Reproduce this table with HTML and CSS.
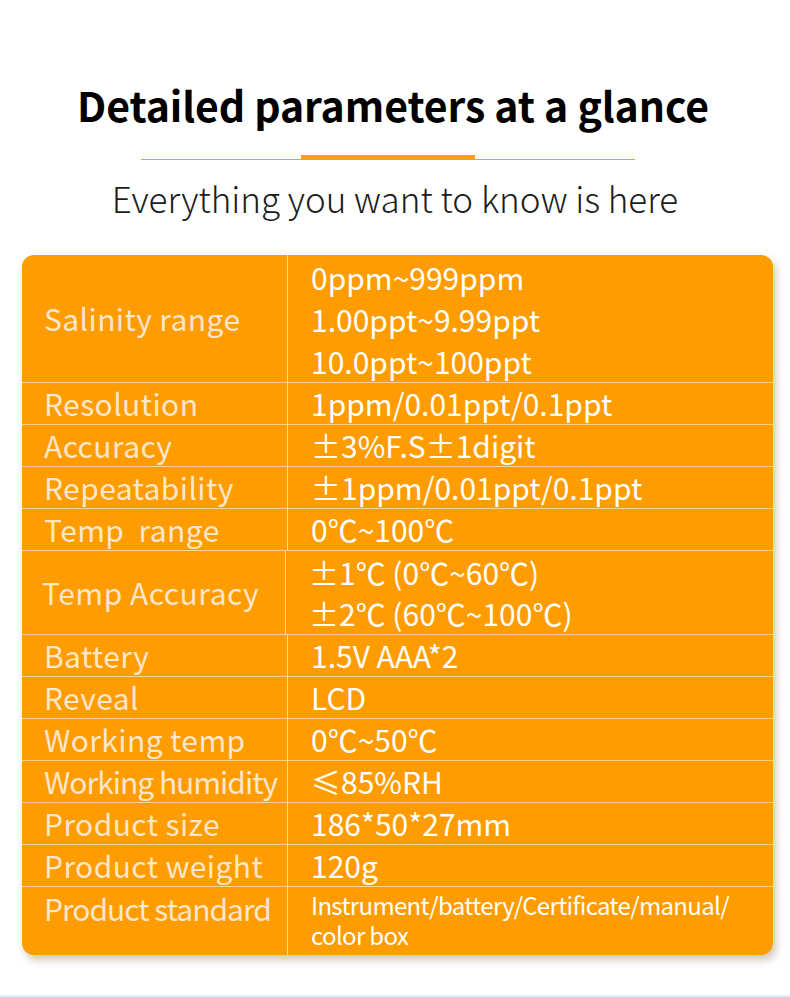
FILE: index.html
```html
<!DOCTYPE html>
<html lang="en">
<head>
<meta charset="utf-8">
<title>Detailed parameters</title>
<link rel="stylesheet" href="styles.css">
</head>
<body>
<div class="page">
  <h1 class="title">Detailed parameters at a glance</h1>
  <div class="divider"><span class="bar"></span><span class="line"></span></div>
  <p class="subtitle">Everything you want to know is here</p>
  <div class="table">
    <div class="row r3"><div class="label">Salinity range</div><div class="value"><div>0ppm~999ppm</div><div>1.00ppt~9.99ppt</div><div>10.0ppt~100ppt</div></div></div>
    <div class="row"><div class="label">Resolution</div><div class="value">1ppm/0.01ppt/0.1ppt</div></div>
    <div class="row"><div class="label">Accuracy</div><div class="value">±3%F.S±1digit</div></div>
    <div class="row"><div class="label">Repeatability</div><div class="value">±1ppm/0.01ppt/0.1ppt</div></div>
    <div class="row"><div class="label">Temp&nbsp; range</div><div class="value">0℃~100℃</div></div>
    <div class="row r2"><div class="label narrow">Temp Accuracy</div><div class="value"><div>±1℃ (0℃~60℃)</div><div>±2℃ (60℃~100℃)</div></div></div>
    <div class="row"><div class="label">Battery</div><div class="value">1.5V AAA*2</div></div>
    <div class="row"><div class="label">Reveal</div><div class="value">LCD</div></div>
    <div class="row"><div class="label">Working temp</div><div class="value">0℃~50℃</div></div>
    <div class="row"><div class="label condensed">Working humidity</div><div class="value">≤85%RH</div></div>
    <div class="row"><div class="label">Product size</div><div class="value">186*50*27mm</div></div>
    <div class="row"><div class="label">Product weight</div><div class="value">120g</div></div>
    <div class="row last"><div class="label condensed">Product standard</div><div class="value small"><div>Instrument/battery/Certificate/manual/</div><div>color box</div></div></div>
  </div>
</div>
<div class="footline"></div>
</body>
</html>
```
FILE: styles.css
```css
html, body {
  margin: 0;
  padding: 0;
  background: #ffffff;
}
body {
  width: 790px;
  height: 997px;
  overflow: hidden;
  position: relative;
  font-family: "Noto Sans CJK SC", "Noto Sans", sans-serif;
}
.page {
  padding-top: 74px;
  height: 920px;
}
.title {
  margin: 0;
  text-align: center;
  font-size: 41px;
  font-weight: 700;
  line-height: 60px;
  color: #000;
  letter-spacing: -0.1px;
  padding-right: 4px;
}
.divider {
  margin: 21px 0 0 141px;
  width: 494px;
  height: 5px;
  position: relative;
}
.divider .line {
  position: absolute;
  left: 0;
  right: 0;
  bottom: 0;
  height: 1px;
  background: #fd9f14;
}
.bar {
  position: absolute;
  left: 160px;
  top: 0;
  width: 174px;
  height: 5px;
  background: #fd9f14;
}
.subtitle {
  margin: 13px 0 0;
  text-align: center;
  font-size: 35px;
  font-weight: 300;
  line-height: 50px;
  color: #1c1c1c;
  letter-spacing: 0;
}
.table {
  margin: 32px 0 0 22px;
  width: 751px;
  background: #fe9c01;
  border-radius: 12px;
  box-shadow: 3px 5px 8px rgba(120, 90, 50, 0.35);
  overflow: hidden;
}
.row {
  display: flex;
  height: 41px;
  border-bottom: 1px solid rgba(255, 226, 170, 0.8);
}
.row.r3 { height: 127px; }
.row.r2 { height: 83px; }
.row.last { height: 68px; border-bottom: none; }
.label {
  width: 243px;
  padding-left: 22px;
  border-right: 1px solid rgba(255, 226, 170, 0.9);
  display: flex;
  align-items: center;
  color: #fde6ca;
  font-size: 30px;
  line-height: 41px;
  letter-spacing: 0.4px;
  white-space: nowrap;
}
.label.narrow { letter-spacing: 0.5px; padding-left: 20px; }
.label.condensed { letter-spacing: -1px; }
.row.last .label { align-items: flex-start; padding-top: 1px; }
.value {
  padding-left: 23px;
  color: #ffffff;
  font-size: 30px;
  line-height: 41px;
  display: flex;
  flex-direction: column;
  justify-content: center;
  white-space: nowrap;
}
.row.r3 .value { line-height: 42px; }
.value.small {
  font-size: 24px;
  line-height: 30px;
  letter-spacing: -0.65px;
  justify-content: flex-start;
  padding-top: 3px;
}
.footline {
  position: absolute;
  left: 0;
  right: 0;
  top: 995px;
  height: 2px;
  background: #deeffb;
}
```
